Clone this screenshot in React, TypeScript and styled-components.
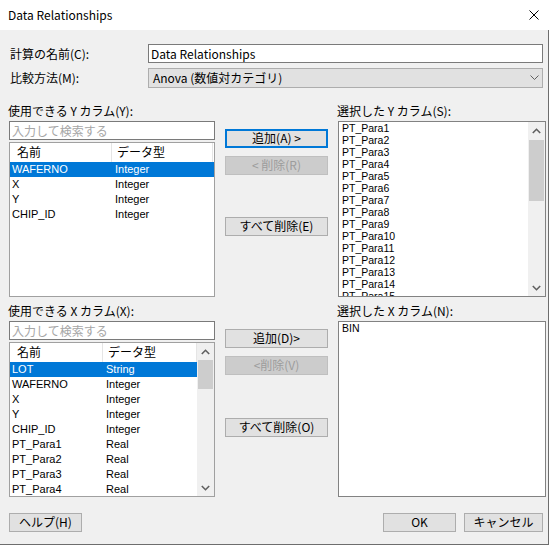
import React from 'react';
import styled, { createGlobalStyle } from 'styled-components';

const Global = createGlobalStyle`
  html, body { margin: 0; padding: 0; background: #ffffff; }
  body {
    font-family: "Noto Sans CJK JP", "Noto Sans", sans-serif;
    font-size: 12px;
    color: #000;
  }
  * { box-sizing: border-box; }
`;

const Window = styled.div`
  width: 549px;
  height: 545px;
  display: flex;
  flex-direction: column;
  overflow: hidden;
`;

const TitleBar = styled.div`
  height: 30px;
  flex: 0 0 30px;
  background: #ffffff;
  display: flex;
  align-items: center;
  justify-content: space-between;
  padding: 0 10px 1px 8px;
  font-size: 12px;
  line-height: 14px;
`;

const CloseBtn = styled.div`
  width: 10px;
  height: 10px;
  display: flex;
`;

const Body = styled.div`
  flex: 1;
  background: #f0f0f0;
  border-right: 1px solid #6d6d6d;
  border-bottom: 1px solid #6d6d6d;
  display: flex;
  flex-direction: column;
  padding-top: 14px;
`;

const FormGrid = styled.div`
  display: grid;
  grid-template-columns: 138px 395px;
  grid-template-rows: 19px 20px;
  row-gap: 5px;
  padding-left: 10px;
`;

const FieldLabel = styled.div`
  display: flex;
  align-items: center;
  line-height: 14px;
  white-space: nowrap;
`;

const TextInput = styled.input`
  height: 19px;
  width: 100%;
  border: 1px solid #7a7a7a;
  background: #ffffff;
  padding: 0 0 1px 2px;
  margin: 0;
  font-family: inherit;
  font-size: 12px;
  color: #000;
  outline: none;
  &::placeholder { color: #a6a6a6; }
`;

const Select = styled.div`
  height: 20px;
  border: 1px solid #adadad;
  background: #e1e1e1;
  display: flex;
  align-items: center;
  justify-content: space-between;
  padding: 0 3px 1px 4px;
  line-height: 14px;
`;

const Group = styled.div<{ $top: number }>`
  display: grid;
  grid-template-columns: 206px 103px 208px;
  grid-template-rows: 17px 176px;
  column-gap: 10px;
  padding-left: 9px;
  margin-top: ${p => p.$top}px;
`;

const GroupLabel = styled.div<{ $col: number }>`
  grid-column: ${p => p.$col};
  grid-row: 1;
  line-height: 14px;
  margin-left: -1px;
  white-space: nowrap;
`;

const LeftCol = styled.div`
  grid-column: 1;
  grid-row: 2;
  display: flex;
  flex-direction: column;
  gap: 2px;
`;

const MidCol = styled.div`
  grid-column: 2;
  grid-row: 2;
  display: flex;
  flex-direction: column;
  padding-top: 8px;
`;

const Button = styled.button<{ $focused?: boolean; $mt?: number; $w?: number }>`
  height: 19px;
  width: ${p => (p.$w ? `${p.$w}px` : '100%')};
  margin: ${p => p.$mt ?? 0}px 0 0 0;
  padding: 0 0 1px 0;
  font-family: inherit;
  font-size: 12px;
  line-height: 14px;
  color: #000;
  background: #e1e1e1;
  border: ${p => (p.$focused ? '2px solid #0078d7' : '1px solid #adadad')};
  white-space: nowrap;
  &:disabled {
    background: #cccccc;
    border-color: #bfbfbf;
    color: #9c9c9c;
  }
`;

const ListView = styled.div`
  flex: 1;
  border: 1px solid #a0a0a0;
  background: #ffffff;
  display: flex;
  overflow: hidden;
`;

const ListContent = styled.div`
  flex: 1;
  display: flex;
  flex-direction: column;
  overflow: hidden;
`;

const HeaderRow = styled.div<{ $c1: number; $c2: number }>`
  display: grid;
  grid-template-columns: ${p => p.$c1}px ${p => p.$c2}px;
  height: 19px;
  flex: 0 0 19px;
`;

const HeaderCell = styled.div<{ $pl: number }>`
  border-right: 1px solid #e5e5e5;
  padding-left: ${p => p.$pl}px;
  display: flex;
  align-items: center;
  line-height: 14px;
  padding-bottom: 1px;
`;

const Row = styled.div<{ $c1: number; $sel?: boolean }>`
  display: grid;
  grid-template-columns: ${p => p.$c1}px 1fr;
  height: 15px;
  flex: 0 0 15px;
  line-height: 15px;
  font-family: "Liberation Sans", Arial, sans-serif;
  font-size: 11px;
  background: ${p => (p.$sel ? '#0078d7' : 'transparent')};
  color: ${p => (p.$sel ? '#ffffff' : '#000000')};
  white-space: nowrap;
`;

const Cell = styled.div<{ $pl: number }>`
  padding-left: ${p => p.$pl}px;
  overflow: hidden;
`;

const ListBox = styled.div`
  grid-column: 3;
  grid-row: 2;
  border: 1px solid #828282;
  background: #ffffff;
  display: flex;
  overflow: hidden;
`;

const BoxItems = styled.div`
  flex: 1;
  display: flex;
  flex-direction: column;
  overflow: hidden;
  padding-left: 3px;
  font-family: "Liberation Sans", Arial, sans-serif;
  font-size: 10.5px;
`;

const BoxItem = styled.div`
  height: 12px;
  flex: 0 0 12px;
  line-height: 12px;
  white-space: nowrap;
`;

const ScrollBar = styled.div`
  width: 17px;
  flex: 0 0 17px;
  background: #f0f0f0;
  display: flex;
  flex-direction: column;
`;

const ScrollArrow = styled.div`
  width: 17px;
  height: 17px;
  flex: 0 0 17px;
  display: flex;
  align-items: center;
  justify-content: center;
`;

const Track = styled.div`
  flex: 1;
  display: flex;
  flex-direction: column;
`;

const Thumb = styled.div<{ $h: number; $mt: number }>`
  height: ${p => p.$h}px;
  margin: ${p => p.$mt}px 1px 0 1px;
  background: #cdcdcd;
`;

const Footer = styled.div`
  display: flex;
  justify-content: space-between;
  padding: 16px 5px 0 9px;
`;

const FooterRight = styled.div`
  display: flex;
  gap: 8px;
`;

const Chevron = ({ up }: { up?: boolean }) => (
  <svg width="9" height="6" viewBox="0 0 9 6">
    <polyline
      points={up ? '0.8,5 4.5,1.3 8.2,5' : '0.8,1 4.5,4.7 8.2,1'}
      fill="none"
      stroke="#606060"
      strokeWidth="1.6"
    />
  </svg>
);

const Scroll = ({ thumbH, thumbTop }: { thumbH: number; thumbTop: number }) => (
  <ScrollBar>
    <ScrollArrow><Chevron up /></ScrollArrow>
    <Track>
      <Thumb $h={thumbH} $mt={thumbTop} />
    </Track>
    <ScrollArrow><Chevron /></ScrollArrow>
  </ScrollBar>
);

type Col = { name: string; type: string };

const yCols: Col[] = [
  { name: 'WAFERNO', type: 'Integer' },
  { name: 'X', type: 'Integer' },
  { name: 'Y', type: 'Integer' },
  { name: 'CHIP_ID', type: 'Integer' },
];

const xCols: Col[] = [
  { name: 'LOT', type: 'String' },
  { name: 'WAFERNO', type: 'Integer' },
  { name: 'X', type: 'Integer' },
  { name: 'Y', type: 'Integer' },
  { name: 'CHIP_ID', type: 'Integer' },
  { name: 'PT_Para1', type: 'Real' },
  { name: 'PT_Para2', type: 'Real' },
  { name: 'PT_Para3', type: 'Real' },
  { name: 'PT_Para4', type: 'Real' },
];

const selectedY = Array.from({ length: 15 }, (_, i) => `PT_Para${i + 1}`);

const ColumnList = ({ cols, c1, c2, scroll }: { cols: Col[]; c1: number; c2: number; scroll?: boolean }) => (
  <ListView>
    <ListContent>
      <HeaderRow $c1={c1} $c2={c2}>
        <HeaderCell $pl={7}>名前</HeaderCell>
        <HeaderCell $pl={5}>データ型</HeaderCell>
      </HeaderRow>
      {cols.map((c, i) => (
        <Row key={c.name + i} $c1={c1} $sel={i === 0}>
          <Cell $pl={2}>{c.name}</Cell>
          <Cell $pl={3}>{c.type}</Cell>
        </Row>
      ))}
    </ListContent>
    {scroll && <Scroll thumbH={29} thumbTop={0} />}
  </ListView>
);

export default function App() {
  return (
    <>
      <Global />
      <Window>
        <TitleBar>
          <span>Data Relationships</span>
          <CloseBtn>
            <svg width="10" height="10" viewBox="0 0 10 10">
              <path d="M0.5 0.5 L9.5 9.5 M9.5 0.5 L0.5 9.5" stroke="#000" strokeWidth="1" fill="none" />
            </svg>
          </CloseBtn>
        </TitleBar>
        <Body>
          <FormGrid>
            <FieldLabel>計算の名前(C):</FieldLabel>
            <TextInput value="Data Relationships" readOnly />
            <FieldLabel>比較方法(M):</FieldLabel>
            <Select>
              <span>Anova (数値対カテゴリ)</span>
              <svg width="9" height="5" viewBox="0 0 9 5">
                <polyline points="0.5,0.5 4.5,4.5 8.5,0.5" fill="none" stroke="#606060" strokeWidth="1" />
              </svg>
            </Select>
          </FormGrid>

          <Group $top={16}>
            <GroupLabel $col={1}>使用できる Y カラム(Y):</GroupLabel>
            <GroupLabel $col={3}>選択した Y カラム(S):</GroupLabel>
            <LeftCol>
              <TextInput placeholder="入力して検索する" />
              <ColumnList cols={yCols} c1={102} c2={101} />
            </LeftCol>
            <MidCol>
              <Button $focused>追加(A) &gt;</Button>
              <Button disabled $mt={8}>&lt; 削除(R)</Button>
              <Button $mt={42}>すべて削除(E)</Button>
            </MidCol>
            <ListBox>
              <BoxItems>
                {selectedY.map(s => (
                  <BoxItem key={s}>{s}</BoxItem>
                ))}
              </BoxItems>
              <Scroll thumbH={61} thumbTop={1} />
            </ListBox>
          </Group>

          <Group $top={7}>
            <GroupLabel $col={1}>使用できる X カラム(X):</GroupLabel>
            <GroupLabel $col={3}>選択した X カラム(N):</GroupLabel>
            <LeftCol>
              <TextInput placeholder="入力して検索する" />
              <ColumnList cols={xCols} c1={93} c2={94} scroll />
            </LeftCol>
            <MidCol>
              <Button>追加(D)&gt;</Button>
              <Button disabled $mt={8}>&lt;削除(V)</Button>
              <Button $mt={43}>すべて削除(O)</Button>
            </MidCol>
            <ListBox>
              <BoxItems>
                <BoxItem>BIN</BoxItem>
              </BoxItems>
            </ListBox>
          </Group>

          <Footer>
            <Button $w={73}>ヘルプ(H)</Button>
            <FooterRight>
              <Button $w={73}>OK</Button>
              <Button $w={79}>キャンセル</Button>
            </FooterRight>
          </Footer>
        </Body>
      </Window>
    </>
  );
}
